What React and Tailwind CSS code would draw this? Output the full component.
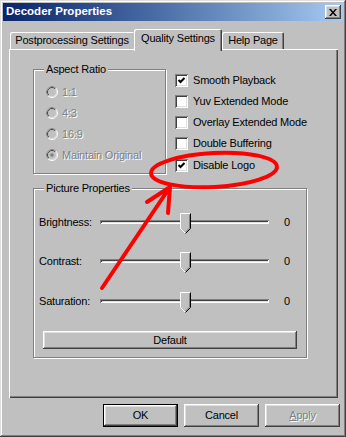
const raised =
  "shadow-[inset_-1px_-1px_#404040,inset_1px_1px_#fff,inset_-2px_-2px_#808080,inset_2px_2px_#dfdfdf]";
const sunken =
  "shadow-[inset_1px_1px_#808080,inset_-1px_-1px_#fff,inset_2px_2px_#404040,inset_-2px_-2px_#dfdfdf]";
const disabledText = "text-[#808080] [text-shadow:1px_1px_0_#fff]";

function Radio({ label, checked }) {
  return (
    <div className="flex items-center h-[12px] gap-[4px]">
      <svg width="12" height="12" viewBox="0 0 12 12">
        <circle cx="6" cy="6" r="5.5" fill="#c0c0c0" stroke="#fff" />
        <path d="M2.1 9.9 A5.5 5.5 0 0 1 9.9 2.1" fill="none" stroke="#808080" />
        <circle cx="6" cy="6" r="4.5" fill="none" stroke="#dfdfdf" />
        <path d="M2.8 9.2 A4.5 4.5 0 0 1 9.2 2.8" fill="none" stroke="#404040" />
        {checked && <circle cx="6" cy="6" r="1.8" fill="#808080" />}
      </svg>
      <span className={disabledText}>{label}</span>
    </div>
  );
}

function Checkbox({ label, checked }) {
  return (
    <div className="flex items-center h-[13px] gap-[5px]">
      <div className={`w-[13px] h-[13px] bg-white ${sunken}`}>
        {checked && (
          <svg width="13" height="13" viewBox="0 0 13 13">
            <polyline points="3.5,6 5.5,8 9.5,4" fill="none" stroke="#000" strokeWidth="2" />
          </svg>
        )}
      </div>
      <span className="whitespace-nowrap">{label}</span>
    </div>
  );
}

function GroupBox({ label, className, children }) {
  return (
    <div
      className={`relative border border-[#808080] shadow-[1px_1px_0_#fff,inset_1px_1px_0_#fff] ${className}`}
    >
      <span className="absolute left-[10px] top-[-8px] px-[2px] bg-[#c0c0c0] leading-[14px]">
        {label}
      </span>
      {children}
    </div>
  );
}

function Thumb() {
  return (
    <svg className="absolute left-[80px] top-[-7px]" width="11" height="21" viewBox="0 0 11 21">
      <polygon points="0.5,0.5 10.5,0.5 10.5,15.5 5.5,20.5 0.5,15.5" fill="#c0c0c0" />
      <polyline points="0.5,15.5 0.5,0.5 10.5,0.5" fill="none" stroke="#fff" />
      <polyline points="0.5,15.5 5.5,20.5" fill="none" stroke="#fff" />
      <polyline points="10.5,0.5 10.5,15.5 5.5,20.5" fill="none" stroke="#000" />
      <polyline points="9.5,1.5 9.5,15 5.5,19" fill="none" stroke="#808080" />
    </svg>
  );
}

function Slider({ label, className }) {
  return (
    <div className={`flex items-center h-[18px] ${className}`}>
      <span className="w-[61px]">{label}</span>
      <div className={`relative w-[169px] h-[4px] ${sunken}`}>
        <Thumb />
      </div>
      <span className="ml-[15px]">0</span>
    </div>
  );
}

function Button({ children, className = "" }) {
  return (
    <div
      className={`flex items-center justify-center bg-[#c0c0c0] ${raised} ${className}`}
    >
      {children}
    </div>
  );
}

export default function App() {
  return (
    <div className="relative w-[346px] h-[437px] bg-[#c0c0c0] p-[3px] text-[11px] tracking-[-0.2px] text-black font-['Liberation_Sans',Arial,sans-serif] shadow-[inset_-1px_-1px_#404040,inset_1px_1px_#dfdfdf,inset_-2px_-2px_#808080,inset_2px_2px_#fff]">
      <div className="flex items-center justify-between h-[18px] pl-[3px] pr-[2px] bg-linear-to-r from-[#0a246a] to-[#a6caf0]">
        <span className="text-white font-bold text-[11.5px] tracking-normal">Decoder Properties</span>
        <Button className="w-[16px] h-[14px]">
          <svg width="8" height="7" viewBox="0 0 8 7">
            <path d="M0 0h2l2 2.5L6 0h2L5 3.5 8 7H6L4 4.5 2 7H0l3-3.5z" fill="#000" />
          </svg>
        </Button>
      </div>

      <div className="flex items-end h-[20px] mt-[8px] ml-[6px]">
        <div className="ml-[1px] w-[124px] h-[17px] flex items-center justify-center rounded-t-[2px] shadow-[inset_1px_1px_#fff]">
          Postprocessing Settings
        </div>
        <div className="relative z-10 top-[2px] w-[88px] h-[22px] pb-[4px] flex items-center justify-center bg-[#c0c0c0] rounded-t-[2px] shadow-[inset_1px_1px_#fff,inset_-1px_0_#404040,inset_-2px_0_#808080]">
          Quality Settings
        </div>
        <div className="w-[62px] h-[17px] flex items-center justify-center rounded-t-[2px] shadow-[inset_1px_1px_#fff,inset_-1px_0_#404040,inset_-2px_0_#808080]">
          Help Page
        </div>
      </div>

      <div className="ml-[6px] w-[329px] h-[349px] pl-[24px] pt-[20px] shadow-[inset_1px_1px_#fff,inset_-1px_-1px_#404040,inset_-2px_-2px_#808080]">
        <div className="flex">
          <GroupBox label="Aspect Ratio" className="w-[133px] h-[105px]">
            <div className="flex flex-col gap-[9px] pt-[16px] pl-[12px]">
              <Radio label="1:1" />
              <Radio label="4:3" />
              <Radio label="16:9" />
              <Radio label="Maintain Original" checked />
            </div>
          </GroupBox>
          <div className="ml-[9px] pt-[5px] flex flex-col gap-[8px]">
            <Checkbox label="Smooth Playback" checked />
            <Checkbox label="Yuv Extended Mode" />
            <Checkbox label="Overlay Extended Mode" />
            <Checkbox label="Double Buffering" />
            <div className="mt-[1px]">
              <Checkbox label="Disable Logo" checked />
            </div>
          </div>
        </div>

        <GroupBox label="Picture Properties" className="mt-[14px] w-[274px] h-[170px]">
          <div className="pt-[24px] pl-[5px]">
            <Slider label="Brightness:" />
            <Slider label="Contrast:" className="mt-[21px]" />
            <Slider label="Saturation:" className="mt-[22px]" />
            <Button className="mt-[21px] ml-[4px] w-[254px] h-[18px]">Default</Button>
          </div>
        </GroupBox>
      </div>

      <div className="flex justify-end gap-[6px] mt-[6px] pr-[3px]">
        <div className="border border-black">
          <Button className="w-[73px] h-[21px]">OK</Button>
        </div>
        <Button className="w-[75px] h-[23px]">Cancel</Button>
        <Button className={`w-[75px] h-[23px] ${disabledText}`}>
          <span>
            <span className="underline">A</span>pply
          </span>
        </Button>
      </div>

      <svg className="absolute inset-0 pointer-events-none" width="346" height="437" viewBox="0 0 346 437">
        <ellipse
          cx="214"
          cy="170"
          rx="63"
          ry="17"
          transform="rotate(-3 214 170)"
          fill="none"
          stroke="#f00"
          strokeWidth="4"
        />
        <path
          d="M102 288 L170 187 M147 202 L170 187 L168 213"
          fill="none"
          stroke="#f00"
          strokeWidth="4"
          strokeLinecap="round"
          strokeLinejoin="round"
        />
      </svg>
    </div>
  );
}
